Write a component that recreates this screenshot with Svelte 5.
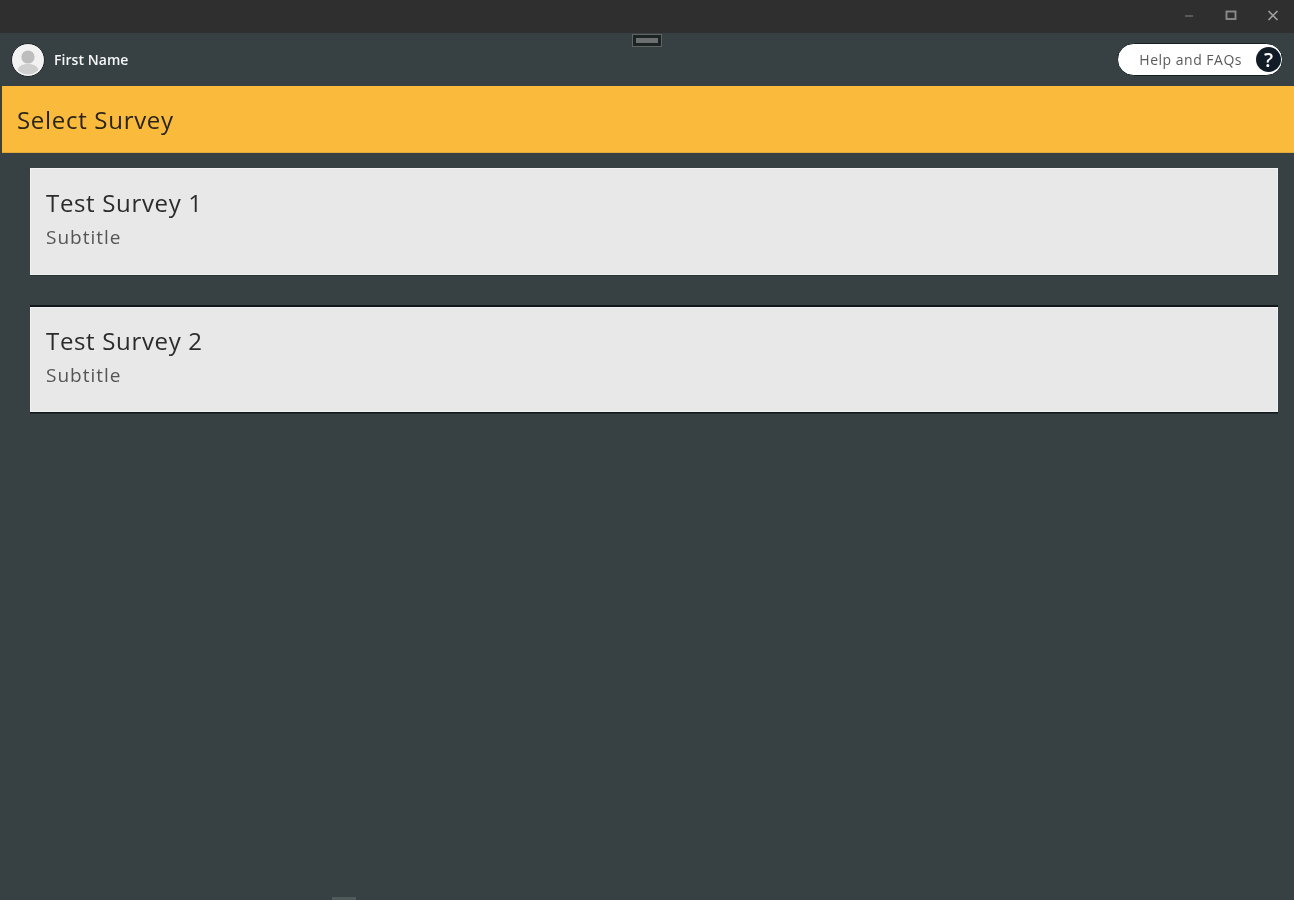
<script>
  const surveys = [
    { title: 'Test Survey 1', subtitle: 'Subtitle', tall: true },
    { title: 'Test Survey 2', subtitle: 'Subtitle', tall: false }
  ];
</script>

<div class="window">
  <header class="titlebar">
    <div class="controls">
      <svg class="ctl" width="12" height="12" viewBox="0 0 12 12"><path d="M2 7h8" stroke="#666" stroke-width="1.6"/></svg>
      <svg class="ctl" width="12" height="12" viewBox="0 0 12 12"><rect x="1.500" y="2.500" width="9" height="7.500" fill="none" stroke="#8a8a8a" stroke-width="1.900"/></svg>
      <svg class="ctl" width="12" height="12" viewBox="0 0 12 12"><path d="M1.500 2l9 9M10.500 2l-9 9" stroke="#a0a0a0" stroke-width="1.600"/></svg>
    </div>
  </header>

  <div class="userbar">
    <div class="handle"><span></span></div>
    <div class="user">
      <svg class="avatar" width="34" height="34" viewBox="0 0 34 34">
        <circle cx="17" cy="17" r="16.500" fill="#f2f2f2" stroke="#1b2426" stroke-width="1"/>
        <circle cx="17" cy="14" r="6.600" fill="#bdbdbd"/>
        <path d="M6.500 27c1.500-4.600 5.600-6 10.500-6s9 1.400 10.500 6c-2.800 2.800-6.500 4.400-10.500 4.400S9.300 29.800 6.500 27z" fill="#cfcfcf"/>
      </svg>
      <span class="name">First Name</span>
    </div>
    <button class="help">
      <span class="help-label">Help and FAQs</span>
      <span class="help-icon">?</span>
    </button>
  </div>

  <div class="banner">Select Survey</div>

  <main class="list">
    {#each surveys as s}
      <article class="card" class:first={s.tall} class:second={!s.tall}>
        <h2>{s.title}</h2>
        <p>{s.subtitle}</p>
      </article>
    {/each}
  </main>

  <div class="artefact"></div>
</div>

<style>
  :global(body) {
    margin: 0;
    background: #374143;
  }
  .window {
    position: relative;
    width: 1294px;
    height: 900px;
    overflow: hidden;
    display: flex;
    flex-direction: column;
    background: #374143;
    font-family: "Open Sans", "Noto Sans", sans-serif;
    filter: blur(0.6px);
  }
  .titlebar {
    height: 33px;
    flex: none;
    background: #2f2f2f;
    display: flex;
    justify-content: flex-end;
    align-items: center;
  }
  .controls {
    display: flex;
    gap: 30px;
    padding-right: 15px;
    margin-top: -3px;
  }
  .ctl {
    display: block;
  }
  .userbar {
    height: 53px;
    flex: none;
    position: relative;
    display: flex;
    justify-content: space-between;
    align-items: center;
    padding: 0 11px;
    box-sizing: border-box;
  }
  .handle {
    position: absolute;
    left: 632px;
    top: 1px;
    width: 30px;
    height: 13px;
    box-sizing: border-box;
    border: 1px solid #5f6465;
    background: #1d2223;
    padding: 3px;
  }
  .handle span {
    display: block;
    height: 5px;
    background: #6c6f6f;
  }
  .user {
    display: flex;
    align-items: center;
    gap: 9px;
  }
  .avatar {
    display: block;
  }
  .name {
    color: #f6f6f6;
    font-size: 14px;
    font-weight: 600;
    letter-spacing: 0.05px;
  }
  .help {
    width: 166px;
    height: 33px;
    border: 1px solid #162022;
    border-radius: 17px;
    background: #fff;
    padding: 0;
    display: flex;
    align-items: center;
    justify-content: flex-end;
    font-family: inherit;
    box-sizing: border-box;
  }
  .help-label {
    color: #5a5a5a;
    font-size: 14px;
    letter-spacing: 0.5px;
    margin-right: 14px;
  }
  .help-icon {
    width: 25px;
    height: 25px;
    border-radius: 50%;
    background: #121c26;
    color: #fff;
    font-size: 20px;
    font-weight: 600;
    line-height: 25px;
    text-align: center;
    margin-right: 1px;
  }
  .banner {
    height: 67px;
    flex: none;
    margin-left: 2px;
    box-sizing: border-box;
    padding-left: 15px;
    display: flex;
    align-items: center;
    background: #fabb3d;
    color: #2a2416;
    font-size: 24px;
    letter-spacing: 0.7px;
    border-bottom: 1px solid #e0a93a;
  }
  .list {
    display: flex;
    flex-direction: column;
    padding: 15px 16px 0 30px;
    gap: 32px;
  }
  .card {
    background: #e8e8e8;
    box-sizing: border-box;
    padding: 16px 16px 0;
    height: 107px;
    border: 1px solid #f1f1f1;
  }
  .card.second {
    height: 105px;
    box-shadow: 0 -2px 0 #11181c, 0 1.500px 0 #11181c;
    padding-top: 15px;
  }
  .card.first {
    box-shadow: 0 1px 0 #2b3234;
  }
  h2 {
    margin: -1px 0 0 -1px;
    font-size: 24px;
    font-weight: 400;
    line-height: 38px;
    letter-spacing: 0.66px;
    color: #2b2b2b;
  }
  p {
    margin: 0 0 0 -1px;
    font-size: 19px;
    line-height: 30px;
    letter-spacing: 1px;
    color: #555;
  }
  .artefact {
    position: absolute;
    left: 332px;
    bottom: 0;
    width: 24px;
    height: 3px;
    background: #4f5a5b;
  }
</style>
